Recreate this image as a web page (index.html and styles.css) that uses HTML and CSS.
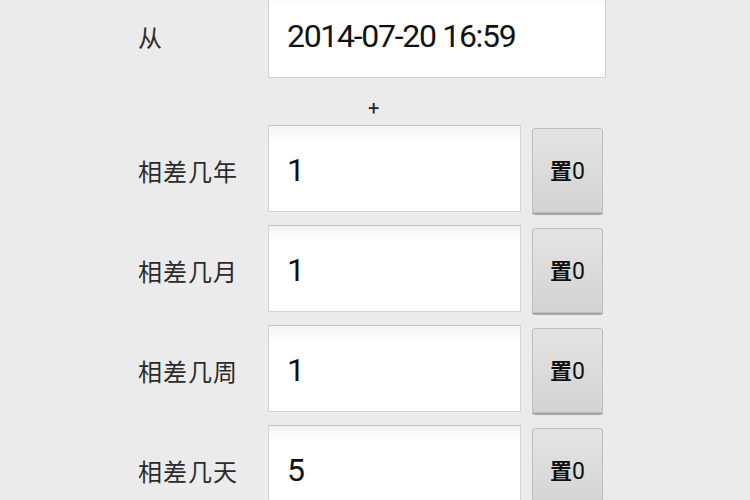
FILE: index.html
```html
<!DOCTYPE html>
<html lang="zh">
<head>
<meta charset="utf-8">
<link rel="stylesheet" href="styles.css">
</head>
<body>
<div class="form">
  <div class="row">
    <div class="label">从</div>
    <div class="field field-wide"><span class="value">2014-07-20 16:59</span></div>
  </div>
  <div class="plus-row"><span class="plus">+</span></div>
  <div class="row">
    <div class="label">相差几年</div>
    <div class="field"><span class="value">1</span></div>
    <div class="btn"><span class="btn-text"><span class="zhi">置</span><span class="zero">0</span></span></div>
  </div>
  <div class="row">
    <div class="label">相差几月</div>
    <div class="field"><span class="value">1</span></div>
    <div class="btn"><span class="btn-text"><span class="zhi">置</span><span class="zero">0</span></span></div>
  </div>
  <div class="row">
    <div class="label">相差几周</div>
    <div class="field"><span class="value">1</span></div>
    <div class="btn"><span class="btn-text"><span class="zhi">置</span><span class="zero">0</span></span></div>
  </div>
  <div class="row">
    <div class="label">相差几天</div>
    <div class="field"><span class="value">5</span></div>
    <div class="btn"><span class="btn-text"><span class="zhi">置</span><span class="zero">0</span></span></div>
  </div>
</div>
</body>
</html>
```
FILE: styles.css
```css
html, body {
  margin: 0;
  padding: 0;
  background: #ebebeb;
  width: 750px;
  height: 500px;
  overflow: hidden;
}
.form {
  display: flex;
  flex-direction: column;
  gap: 13px;
  margin-top: -9px;
  padding-left: 138px;
}
.row {
  display: flex;
  align-items: flex-start;
  height: 87px;
}
.label {
  width: 130px;
  height: 87px;
  display: flex;
  align-items: center;
  padding-top: 3px;
  box-sizing: border-box;
  font-family: "Noto Sans CJK SC", sans-serif;
  font-size: 24px;
  letter-spacing: 1px;
  color: #2b2b2b;
}
.field {
  width: 253px;
  height: 87px;
  box-sizing: border-box;
  background: linear-gradient(#f2f2f2 0, #ffffff 14px, #ffffff 100%);
  border: 1px solid #d2d2d2;
  border-top-color: #c4c4c4;
  display: flex;
  align-items: center;
  padding-left: 18px;
  padding-top: 2px;
}
.field-wide {
  width: 338px;
}
.value {
  font-family: Roboto, "Open Sans", sans-serif;
  font-size: 32px;
  letter-spacing: -1.3px;
  color: #111;
}
.plus-row {
  height: 21px;
  padding-left: 230px;
  box-sizing: border-box;
}
.plus {
  display: block;
  padding-top: 6px;
  font-family: Roboto, sans-serif;
  font-size: 20px;
  line-height: 23px;
  color: #222;
}
.btn {
  margin-left: 11px;
  margin-top: 3px;
  width: 71px;
  height: 85px;
  box-sizing: border-box;
  border: 1px solid #bdbdbd;
  border-radius: 3px;
  background: linear-gradient(#e4e4e4, #d3d3d3);
  box-shadow: 0 2px 0 #a6a6a6;
  display: flex;
  align-items: center;
  justify-content: center;
  padding-top: 2px;
  color: #111;
}
.btn-text {
  line-height: 26px;
  white-space: nowrap;
}
.zhi {
  font-family: "Noto Sans CJK SC", sans-serif;
  font-weight: bold;
  font-size: 22px;
}
.zero {
  font-family: Roboto, sans-serif;
  font-size: 23px;
}
```
